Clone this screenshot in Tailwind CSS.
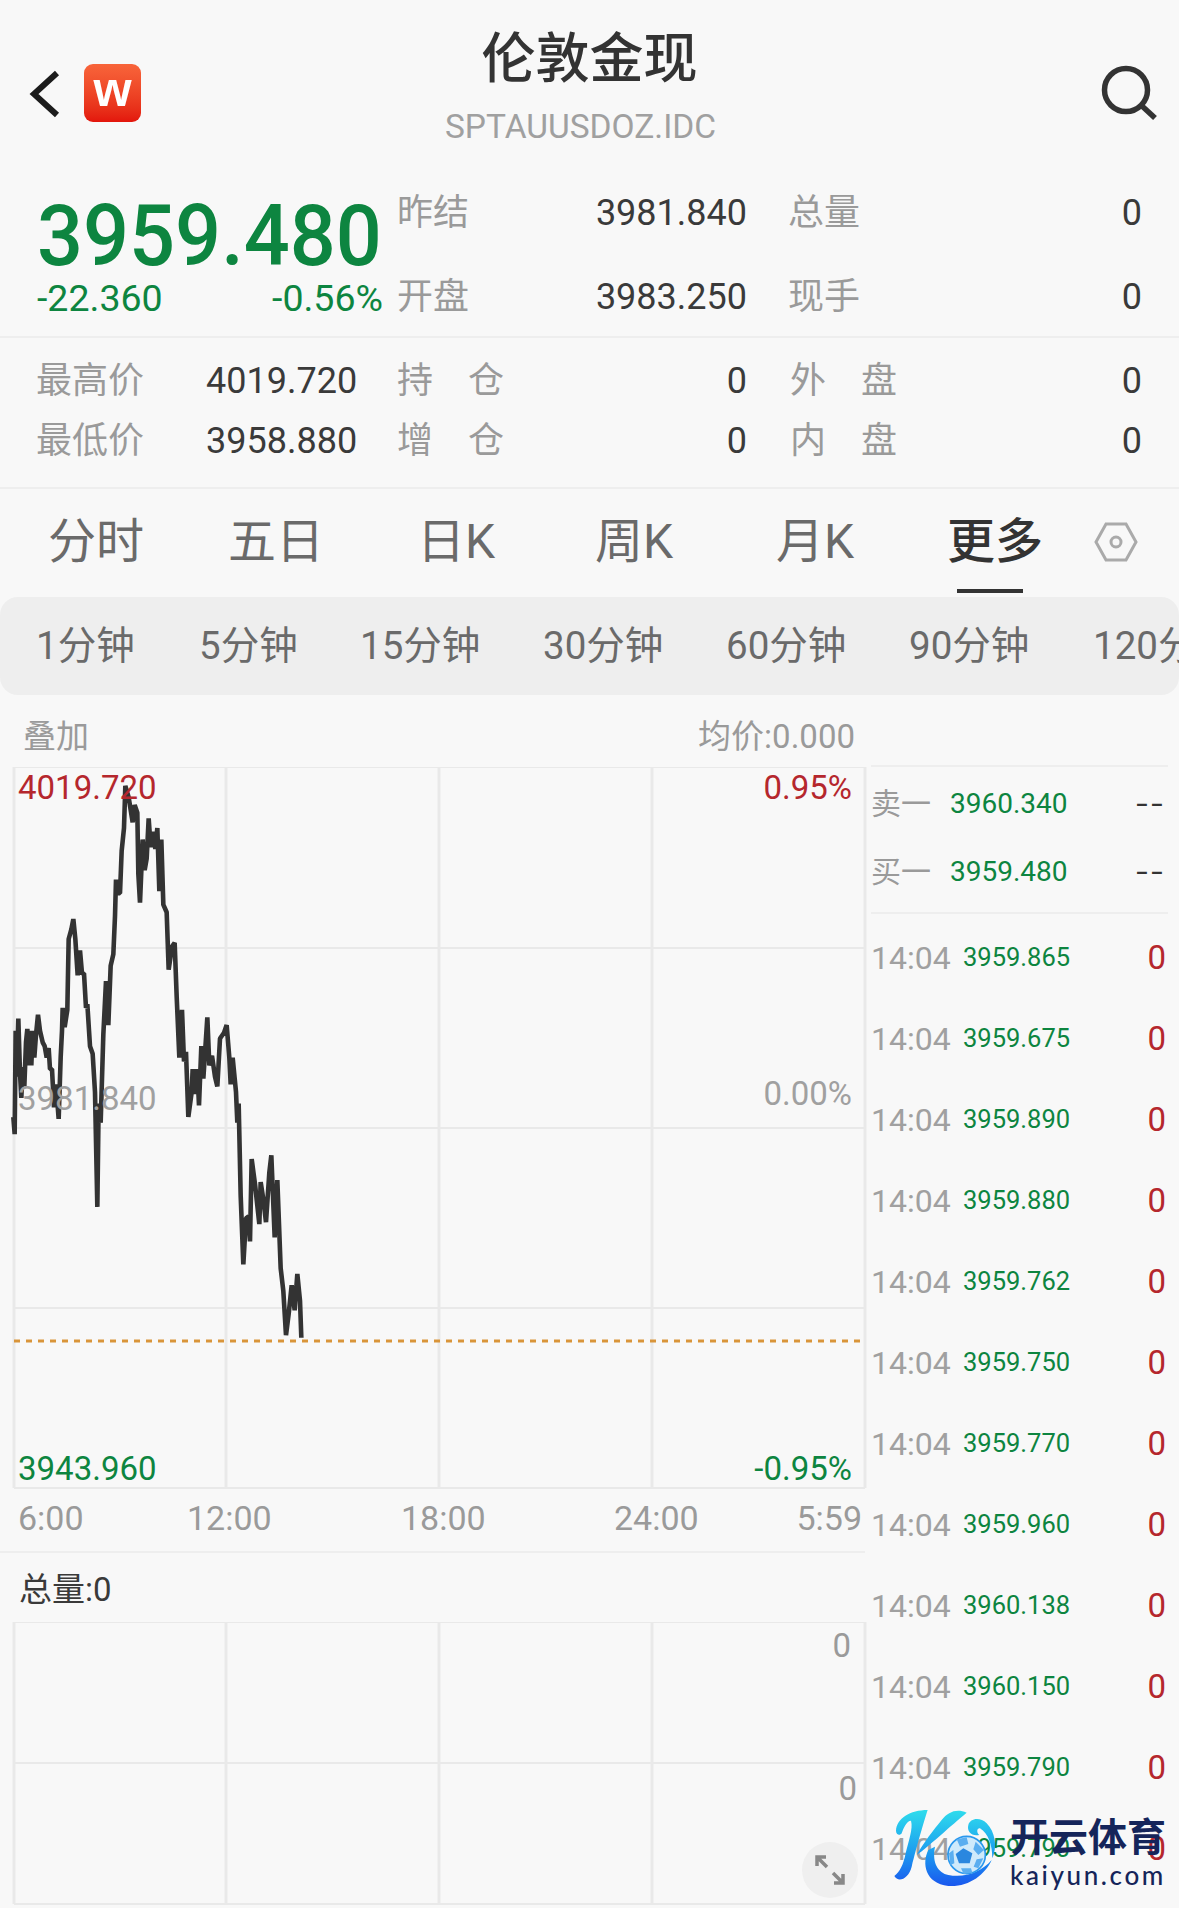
<!DOCTYPE html>
<html lang="zh-CN">
<head>
  <meta charset="UTF-8">
  <title>伦敦金现</title>
  <script src="https://cdn.jsdelivr.net/npm/@tailwindcss/browser@4"></script>
</head>
<body class="bg-[#f8f8f8] font-['Roboto','Noto_Sans_CJK_SC',sans-serif] text-[#3a3a3a] overflow-hidden">
  <div class="w-[1179px] h-[1908px] overflow-hidden">

    <!-- Header -->
    <header class="h-[170px] relative flex">
      <svg class="absolute left-[29px] top-[68px]" width="34" height="52" viewBox="0 0 34 52" fill="none"><path d="M28 5 L5 26 L28 47" stroke="#1c1c1c" stroke-width="6"/></svg>
      <div class="absolute left-[84px] top-[64px] w-[57px] h-[58px] rounded-[9px] bg-gradient-to-b from-[#f8643a] to-[#e3150c] flex items-center justify-center text-white font-bold text-[49px] leading-none pb-[8px] font-['Liberation_Sans',sans-serif]">w</div>
      <div class="w-full flex flex-col items-center">
        <div class="text-[54px] leading-none font-medium mt-[33px] text-[#333]">伦敦金现</div>
        <div class="text-[33.5px] leading-none text-[#a0a0a0] mt-[23px] -ml-[18px]">SPTAUUSDOZ.IDC</div>
      </div>
      <svg class="absolute left-[1098px] top-[64px]" width="60" height="56" viewBox="0 0 60 56" fill="none"><circle cx="28" cy="26" r="21.5" stroke="#333" stroke-width="5.5"/><path d="M44 42 L57 54" stroke="#333" stroke-width="5.5"/></svg>
    </header>

    <!-- Quote -->
    <section class="h-[168px] border-b-2 border-[#eeeeee] flex">
      <div class="w-[397px] pl-[37px] shrink-0">
        <div class="text-[81px] leading-none font-medium text-[#0d8540] h-[82px] mt-[24px] scale-y-[1.05] origin-top whitespace-nowrap">3959.480</div>
        <div class="flex justify-between text-[37.5px] leading-none text-[#0d8540] pr-[14px] mt-[4px]"><span>-22.360</span><span>-0.56%</span></div>
      </div>
      <div class="flex-1 pr-[37px] text-[36px] leading-none whitespace-nowrap pt-[1px]">
        <div class="flex items-center h-[84px]"><span class="w-[350px] flex justify-between"><span class="text-[#9a9a9a]">昨结</span><span>3981.840</span></span><span class="text-[#9a9a9a] ml-[41px]">总量</span><span class="ml-auto">0</span></div>
        <div class="flex items-center h-[84px]"><span class="w-[350px] flex justify-between"><span class="text-[#9a9a9a]">开盘</span><span>3983.250</span></span><span class="text-[#9a9a9a] ml-[41px]">现手</span><span class="ml-auto">0</span></div>
      </div>
    </section>

    <section class="h-[151px] border-b-2 border-[#eeeeee] text-[36px] leading-none pl-[36px] pr-[37px] pt-[13px]">
      <div class="flex items-center h-[60px]"><span class="w-[170px] text-[#9a9a9a]">最高价</span><span class="w-[191px]">4019.720</span><span class="w-[107px] flex justify-between text-[#9a9a9a]"><span>持</span><span>仓</span></span><span class="w-[243px] text-right">0</span><span class="w-[107px] ml-[43px] flex justify-between text-[#9a9a9a]"><span>外</span><span>盘</span></span><span class="ml-auto">0</span></div>
      <div class="flex items-center h-[60px]"><span class="w-[170px] text-[#9a9a9a]">最低价</span><span class="w-[191px]">3958.880</span><span class="w-[107px] flex justify-between text-[#9a9a9a]"><span>增</span><span>仓</span></span><span class="w-[243px] text-right">0</span><span class="w-[107px] ml-[43px] flex justify-between text-[#9a9a9a]"><span>内</span><span>盘</span></span><span class="ml-auto">0</span></div>
    </section>

    <!-- Tabs -->
    <nav class="h-[108px] relative flex items-center text-[48px] leading-none text-[#6a6a6a] pb-[2px]">
      <span class="absolute left-[48px]">分时</span>
      <span class="absolute left-[228px]">五日</span>
      <span class="absolute left-[417px]">日K</span>
      <span class="absolute left-[595px]">周K</span>
      <span class="absolute left-[776px]">月K</span>
      <span class="absolute left-[947px] font-medium text-[#333]">更多</span>
      <span class="absolute left-[957px] top-[100px] w-[66px] h-[4px] bg-[#333]"></span>
      <svg class="absolute left-[1094px] top-[32px]" width="44" height="42" viewBox="0 0 44 42" fill="none" stroke="#aaaaaa" stroke-width="3"><path d="M12 3 H32 L42 21 L32 39 H12 L2 21 Z"/><circle cx="22" cy="21" r="5"/></svg>
    </nav>

    <!-- Period bar -->
    <div class="h-[98px] bg-[#eeeeee] rounded-[18px] flex items-center text-[38.5px] leading-none text-[#6a6a6a] relative overflow-hidden">
      <span class="absolute left-[36px]">1分钟</span>
      <span class="absolute left-[199px]">5分钟</span>
      <span class="absolute left-[360px]">15分钟</span>
      <span class="absolute left-[543px]">30分钟</span>
      <span class="absolute left-[726px]">60分钟</span>
      <span class="absolute left-[909px]">90分钟</span>
      <span class="absolute left-[1093px] whitespace-nowrap">120分钟</span>
    </div>

    <div class="flex">
      <!-- Charts -->
      <div class="w-[868px] shrink-0 relative">
        <div class="h-[72px] flex justify-between items-center pl-[23px] pr-[13px] text-[33px] leading-none text-[#9a9a9a] pt-[10px]"><span>叠加</span><span>均价:0.000</span></div>
        <div class="relative h-[722px]">
          <svg class="absolute left-0 top-0" width="868" height="722" viewBox="0 767 868 722" fill="none">
            <g stroke="#e9e9e9" stroke-width="2">
              <path d="M14 767 H865 M14 948 H865 M14 1128 H865 M14 1308 H865 M14 1488 H865"/>
              <path d="M14 767 V1488 M226 767 V1488 M439 767 V1488 M652 767 V1488 M865 767 V1488" stroke-width="3"/>
            </g>
            <path d="M14 1341 H862" stroke="#d9953a" stroke-width="3" stroke-dasharray="6 6"/>
            <g transform="translate(0,740) scale(0.33333,0.3827)">
              <polyline stroke="#333" stroke-width="4.6" vector-effect="non-scaling-stroke" stroke-linejoin="bevel" points="40,985 44,1030 47,760 50,880 55,728 60,870 64,935 68,855 73,905 78,790 82,755 87,850 90,760 94,850 98,760 103,830 108,770 114,718 120,760 128,790 134,800 140,830 146,805 150,860 156,860 162,960 168,900 176,990 182,830 186,760 188,700 194,750 202,705 206,520 214,495 220,468 226,520 233,615 240,550 246,610 252,610 258,700 262,690 270,800 278,820 285,920 292,1220 296,950 302,1000 310,770 318,630 325,745 332,590 340,560 345,460 348,365 352,400 360,400 365,290 372,230 376,120 386,150 398,215 404,170 412,190 415,350 420,425 428,260 434,340 440,310 446,205 452,280 460,240 466,285 472,230 478,395 484,260 490,430 500,450 506,600 516,540 524,530 530,670 538,830 546,705 552,840 558,815 565,985 575,920 578,860 585,925 592,860 597,955 604,800 610,885 622,725 628,850 636,825 645,880 652,905 660,780 672,765 680,745 688,830 692,900 698,830 708,920 712,1000 716,950 722,1190 730,1370 738,1250 746,1245 750,1310 755,1095 765,1160 778,1265 782,1155 790,1200 798,1260 808,1130 814,1085 824,1300 832,1150 842,1380 850,1440 858,1555 866,1500 875,1425 884,1490 892,1395 900,1465 904,1562"/>
            </g>
          </svg>
          <span class="absolute left-[18px] top-[4px] text-[33px] leading-none text-[#b5272d]">4019.720</span>
          <span class="absolute right-[16px] top-[4px] text-[33px] leading-none text-[#b5272d]">0.95%</span>
          <span class="absolute left-[18px] top-[315px] text-[33px] leading-none text-[#a0a0a0]">3981.840</span>
          <span class="absolute right-[16px] top-[310px] text-[33px] leading-none text-[#a0a0a0]">0.00%</span>
          <span class="absolute left-[18px] top-[685px] text-[33px] leading-none text-[#0d8540]">3943.960</span>
          <span class="absolute right-[16px] top-[685px] text-[33px] leading-none text-[#0d8540]">-0.95%</span>
        </div>
        <div class="relative h-[64px] mr-[3px] border-b-2 border-[#eeeeee] text-[34px] leading-none text-[#9a9a9a]">
          <span class="absolute left-[18px] top-[12px]">6:00</span>
          <span class="absolute left-[187px] top-[12px]">12:00</span>
          <span class="absolute left-[401px] top-[12px]">18:00</span>
          <span class="absolute left-[614px] top-[12px]">24:00</span>
          <span class="absolute right-[3px] top-[12px]">5:59</span>
        </div>
        <div class="h-[69px] flex items-center pl-[19px] pt-[3px] text-[33px] leading-none text-[#3a3a3a]">总量:0</div>
        <div class="relative h-[286px]">
          <svg class="absolute left-0 top-0" width="868" height="286" viewBox="0 1622 868 286" fill="none" stroke="#e9e9e9" stroke-width="2">
            <path d="M14 1622 H865 M14 1763 H865 M14 1904 H865"/>
            <path d="M14 1622 V1904 M226 1622 V1904 M439 1622 V1904 M652 1622 V1904 M865 1622 V1904" stroke-width="3"/>
          </svg>
          <span class="absolute right-[17px] top-[7px] text-[33px] leading-none text-[#9a9a9a]">0</span>
          <span class="absolute right-[11px] top-[150px] text-[33px] leading-none text-[#9a9a9a]">0</span>
          <div class="absolute left-[802px] top-[220px] w-[56px] h-[56px] rounded-full bg-[#efefef] flex items-center justify-center">
            <svg width="32" height="32" viewBox="0 0 32 32" fill="none" stroke="#888" stroke-width="3.5"><path d="M3 12 V3 H12 M3 3 L13 13 M29 20 V29 H20 M29 29 L19 19"/></svg>
          </div>
        </div>
      </div>

      <!-- Trades -->
      <div class="flex-1 pl-[3px] relative pt-[70px]">
        <div class="border-y-2 border-[#eeeeee] h-[149px] mr-[11px] pt-[3px]">
          <div class="flex items-center h-[68px] leading-none"><span class="text-[#9a9a9a] text-[30px] w-[79px]">卖一</span><span class="text-[#0d8540] text-[28px]">3960.340</span><span class="ml-auto text-[42px] font-light tracking-[3px] text-[#333] mr-[2px]">--</span></div>
          <div class="flex items-center h-[68px] leading-none"><span class="text-[#9a9a9a] text-[30px] w-[79px]">买一</span><span class="text-[#0d8540] text-[28px]">3959.480</span><span class="ml-auto text-[42px] font-light tracking-[3px] text-[#333] mr-[2px]">--</span></div>
        </div>
        <div class="pr-[13px] pt-[3px]">
          <div class="flex items-center h-[81px]"><span class="text-[32px] leading-none text-[#a0a0a0] w-[92px]">14:04</span><span class="text-[25.5px] leading-none text-[#0d8540]">3959.865</span><span class="ml-auto text-[33px] leading-none text-[#b5272d]">0</span></div>
          <div class="flex items-center h-[81px]"><span class="text-[32px] leading-none text-[#a0a0a0] w-[92px]">14:04</span><span class="text-[25.5px] leading-none text-[#0d8540]">3959.675</span><span class="ml-auto text-[33px] leading-none text-[#b5272d]">0</span></div>
          <div class="flex items-center h-[81px]"><span class="text-[32px] leading-none text-[#a0a0a0] w-[92px]">14:04</span><span class="text-[25.5px] leading-none text-[#0d8540]">3959.890</span><span class="ml-auto text-[33px] leading-none text-[#b5272d]">0</span></div>
          <div class="flex items-center h-[81px]"><span class="text-[32px] leading-none text-[#a0a0a0] w-[92px]">14:04</span><span class="text-[25.5px] leading-none text-[#0d8540]">3959.880</span><span class="ml-auto text-[33px] leading-none text-[#b5272d]">0</span></div>
          <div class="flex items-center h-[81px]"><span class="text-[32px] leading-none text-[#a0a0a0] w-[92px]">14:04</span><span class="text-[25.5px] leading-none text-[#0d8540]">3959.762</span><span class="ml-auto text-[33px] leading-none text-[#b5272d]">0</span></div>
          <div class="flex items-center h-[81px]"><span class="text-[32px] leading-none text-[#a0a0a0] w-[92px]">14:04</span><span class="text-[25.5px] leading-none text-[#0d8540]">3959.750</span><span class="ml-auto text-[33px] leading-none text-[#b5272d]">0</span></div>
          <div class="flex items-center h-[81px]"><span class="text-[32px] leading-none text-[#a0a0a0] w-[92px]">14:04</span><span class="text-[25.5px] leading-none text-[#0d8540]">3959.770</span><span class="ml-auto text-[33px] leading-none text-[#b5272d]">0</span></div>
          <div class="flex items-center h-[81px]"><span class="text-[32px] leading-none text-[#a0a0a0] w-[92px]">14:04</span><span class="text-[25.5px] leading-none text-[#0d8540]">3959.960</span><span class="ml-auto text-[33px] leading-none text-[#b5272d]">0</span></div>
          <div class="flex items-center h-[81px]"><span class="text-[32px] leading-none text-[#a0a0a0] w-[92px]">14:04</span><span class="text-[25.5px] leading-none text-[#0d8540]">3960.138</span><span class="ml-auto text-[33px] leading-none text-[#b5272d]">0</span></div>
          <div class="flex items-center h-[81px]"><span class="text-[32px] leading-none text-[#a0a0a0] w-[92px]">14:04</span><span class="text-[25.5px] leading-none text-[#0d8540]">3960.150</span><span class="ml-auto text-[33px] leading-none text-[#b5272d]">0</span></div>
          <div class="flex items-center h-[81px]"><span class="text-[32px] leading-none text-[#a0a0a0] w-[92px]">14:04</span><span class="text-[25.5px] leading-none text-[#0d8540]">3959.790</span><span class="ml-auto text-[33px] leading-none text-[#b5272d]">0</span></div>
          <div class="flex items-center h-[81px]"><span class="text-[32px] leading-none text-[#a0a0a0] w-[92px]">14:04</span><span class="text-[25.5px] leading-none text-[#0d8540]">3959.790</span><span class="ml-auto text-[33px] leading-none text-[#b5272d]">0</span></div>
        </div>
      </div>
    </div>
  </div>

  <!-- Watermark -->
  <div class="absolute left-[885px] top-[1800px] w-[294px] h-[95px]">
    <svg class="absolute left-0 top-0" width="120" height="95" viewBox="0 0 360 285" fill="none">
      <defs>
        <linearGradient id="kgrad" x1="0" y1="30" x2="0" y2="260" gradientUnits="userSpaceOnUse"><stop offset="0" stop-color="#2fdcec"/><stop offset="0.55" stop-color="#1c9df0"/><stop offset="1" stop-color="#1a56ee"/></linearGradient>
      </defs>
      <path d="M33 92 C35 55 75 30 128 30 C118 60 95 140 80 200 C72 235 40 250 28 228 C45 215 55 195 62 160 C70 125 85 85 78 62 C65 62 55 85 50 100 C45 108 33 105 33 92 Z" fill="url(#kgrad)"/>
      <path d="M245 38 C215 25 190 35 170 60 C145 90 115 130 95 165 C130 140 200 75 245 38 Z" fill="url(#kgrad)"/>
      <path d="M130 150 C110 190 120 250 190 258 C250 262 300 225 320 180 C290 215 240 235 190 225 C160 218 140 190 150 140 Z" fill="url(#kgrad)"/>
      <path d="M283 105 C260 110 245 95 250 75 C255 55 285 50 305 70 C330 95 338 140 322 175 C322 135 310 100 285 85 C278 82 272 95 283 105 Z" fill="url(#kgrad)"/>
      <circle cx="245" cy="165" r="56" fill="#cfeafb" stroke="#2a98ee" stroke-width="5"/>
      <path d="M235 145 L262 160 L254 190 L222 190 L212 162 Z" fill="#2a87df"/>
      <path d="M215 118 L245 112 L250 132 L225 140 Z M272 125 L297 150 L280 165 L265 148 Z M192 160 L205 150 L208 190 L196 195 Z M228 205 L258 205 L262 218 L236 222 Z M275 178 L295 175 L280 205 L266 200 Z" fill="#5aaef0"/>
    </svg>
    <div class="absolute left-[125px] top-[19px] w-[160px] text-[39px] leading-none font-bold text-[#15255a] whitespace-nowrap">开云体育</div>
    <div class="absolute left-[125px] top-[62px] text-[26px] leading-none font-medium text-[#15255a] tracking-[2.6px] font-['Lato',sans-serif] whitespace-nowrap">kaiyun.com</div>
  </div>
</body>
</html>
